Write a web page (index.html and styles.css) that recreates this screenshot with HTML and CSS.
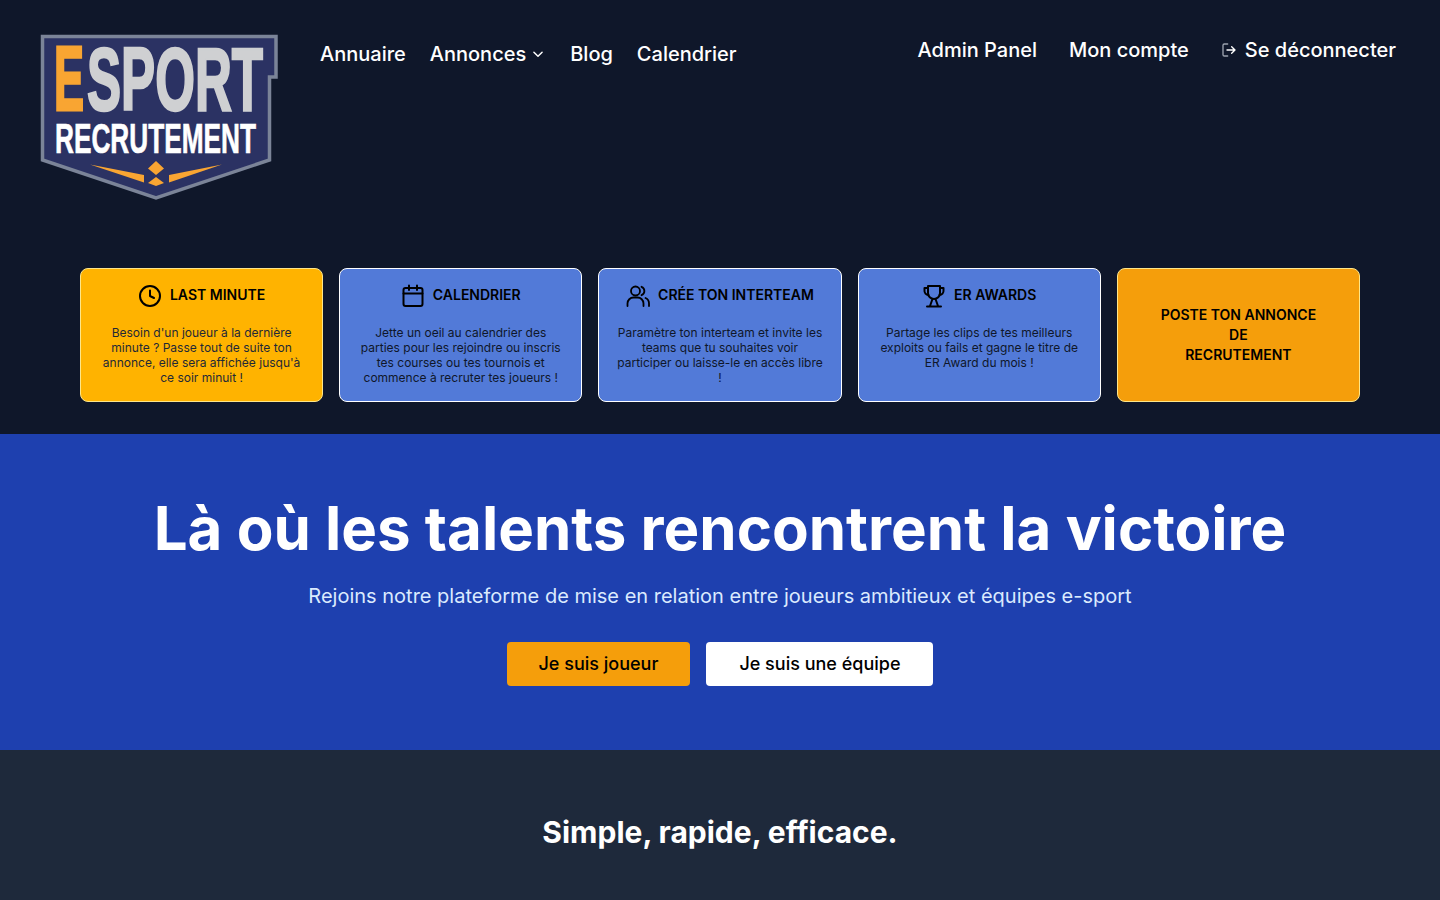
FILE: index.html
```html
<!DOCTYPE html>
<html lang="fr">
<head>
    <meta charset="UTF-8">
    <meta name="viewport" content="width=device-width, initial-scale=1.0">
    <title>Esport Recrutement</title>
    <link rel="stylesheet" href="styles.css">
</head>
<body>
    <header class="top">
        <a class="logo" href="#">
            <svg width="240" height="168" viewBox="40 33 240 168">
                <path d="M42.500 36.500H276V77H269.500V160L156 198L42.500 160Z" fill="#2b3263" stroke="#7b8498" stroke-width="3.500"/>
                <text class="logo-text logo-e" transform="translate(54 110) scale(1 1.700)" font-size="53" textLength="30" lengthAdjust="spacingAndGlyphs">E</text>
                <text class="logo-text logo-sport" transform="translate(87 110) scale(1 1.400)" font-size="63" textLength="176" lengthAdjust="spacingAndGlyphs">SPORT</text>
                <text class="logo-text logo-rec" transform="translate(55 153) scale(1 1.340)" font-size="32" textLength="201" lengthAdjust="spacingAndGlyphs">RECRUTEMENT</text>
                <path d="M90 164.500L144 175V182.500Z M222 164.500L169 175V182.500Z" fill="#f9a532"/>
                <path d="M156 161L164 168.500L156 175L148 168.500Z M156 177L164 183L156 186L148 183Z" fill="#f9a532"/>
            </svg>
        </a>
        <nav class="nav-main">
            <a href="#">Annuaire</a>
            <a href="#" class="has-caret">Annonces
                <svg width="14" height="14" viewBox="0 0 24 24" fill="none" stroke="currentColor" stroke-width="2.500" stroke-linecap="round" stroke-linejoin="round"><path d="M5 9l7 7 7-7"/></svg>
            </a>
            <a href="#">Blog</a>
            <a href="#">Calendrier</a>
        </nav>
        <nav class="nav-user">
            <a href="#">Admin Panel</a>
            <a href="#">Mon compte</a>
            <a href="#" class="logout">
                <svg width="16" height="16" viewBox="0 0 24 24" fill="none" stroke="currentColor" stroke-width="2" stroke-linecap="round" stroke-linejoin="round"><path d="M10 3H5a2 2 0 0 0-2 2v14a2 2 0 0 0 2 2h5" stroke="#9ca3af"/><path d="M9 12h12M16 7l5 5-5 5"/></svg>
                Se déconnecter
            </a>
        </nav>
    </header>

    <section class="cards">
        <a class="card card-amber" href="#">
            <h3><svg width="24" height="24" viewBox="0 0 24 24" fill="none" stroke="currentColor" stroke-width="2" stroke-linecap="round" stroke-linejoin="round"><circle cx="12" cy="12" r="10"/><path d="M12 6.500V12l4 2"/></svg><span>LAST MINUTE</span></h3>
            <p>Besoin d'un joueur à la dernière minute ? Passe tout de suite ton annonce, elle sera affichée jusqu'à ce soir minuit !</p>
        </a>
        <a class="card" href="#">
            <h3><svg width="24" height="24" viewBox="0 0 24 24" fill="none" stroke="currentColor" stroke-width="2" stroke-linecap="round" stroke-linejoin="round"><rect x="2.500" y="4" width="19" height="18" rx="2"/><path d="M8 1.500V6M16 1.500V6M2.500 9.500h19"/></svg><span>CALENDRIER</span></h3>
            <p>Jette un oeil au calendrier des parties pour les rejoindre ou inscris tes courses ou tes tournois et commence à recruter tes joueurs !</p>
        </a>
        <a class="card" href="#">
            <h3><svg width="24" height="24" viewBox="0 0 24 24" fill="none" stroke="currentColor" stroke-width="1.800" stroke-linecap="round" stroke-linejoin="round"><circle cx="9.500" cy="7" r="4.500"/><path d="M1.500 22v-2.500a6 6 0 0 1 6-6h4a6 6 0 0 1 6 6V22"/><path d="M15.500 2.800a4.500 4.500 0 0 1 0 8.400M19.500 14a6 6 0 0 1 3.500 5.500V22"/></svg><span>CRÉE TON INTERTEAM</span></h3>
            <p>Paramètre ton interteam et invite les teams que tu souhaites voir participer ou laisse-le en accès libre !</p>
        </a>
        <a class="card" href="#">
            <h3><svg width="24" height="24" viewBox="0 0 24 24" fill="none" stroke="currentColor" stroke-width="2" stroke-linecap="round" stroke-linejoin="round"><path d="M6 2h12v7a6 6 0 0 1-12 0Z"/><path d="M6 4H2.500v2.500A4 4 0 0 0 6.500 11M18 4h3.500v2.500a4 4 0 0 1-4 4.500"/><path d="M10.500 15L8 22M13.500 15L16 22M5 22.500h14"/></svg><span>ER AWARDS</span></h3>
            <p>Partage les clips de tes meilleurs exploits ou fails et gagne le titre de ER Award du mois !</p>
        </a>
        <a class="card card-cta" href="#">POSTE TON ANNONCE<br>DE<br>RECRUTEMENT</a>
    </section>

    <section class="hero">
        <h1>Là où les talents rencontrent la victoire</h1>
        <p>Rejoins notre plateforme de mise en relation entre joueurs ambitieux et équipes e-sport</p>
        <div class="hero-actions">
            <a class="btn btn-orange" href="#">Je suis joueur</a>
            <a class="btn btn-white" href="#">Je suis une équipe</a>
        </div>
    </section>

    <section class="simple">
        <h2>Simple, rapide, efficace.</h2>
    </section>
</body>
</html>
```

FILE: styles.css
```css
* {
    box-sizing: border-box;
}

html, body {
    height: 100%;
}

body {
    margin: 0;
    overflow: hidden;
    font-family: 'Inter', sans-serif;
    background: #0f172a;
    color: #fff;
}

a {
    color: inherit;
    text-decoration: none;
}

.top {
    display: flex;
    align-items: flex-start;
    height: 268px;
    padding: 33px 32px 0 40px;
    font-size: 20px;
    line-height: 28px;
    font-weight: 500;
}

.logo {
    display: block;
    width: 240px;
    height: 168px;
}

.logo svg {
    display: block;
}

.logo-text {
    font-family: 'Liberation Sans Narrow', 'Liberation Sans', sans-serif;
    font-weight: 700;
    stroke-width: 1.800;
}

.logo-e {
    fill: #f9a532;
    stroke: #f9a532;
}

.logo-sport {
    fill: #cfd0d2;
    stroke: #cfd0d2;
}

.logo-rec {
    fill: #fff;
    stroke: #fff;
    stroke-width: 0.500;
}

.nav-main {
    display: flex;
    gap: 24px;
    margin: 7px 0 0 40px;
}

.has-caret {
    display: flex;
    align-items: center;
    gap: 5px;
    padding-right: 1px;
}

.nav-user {
    display: flex;
    gap: 32px;
    margin: 3px 12px 0 auto;
}

.logout {
    display: flex;
    align-items: center;
    gap: 8px;
}

.cards {
    display: grid;
    grid-template-columns: repeat(5, 1fr);
    gap: 16px;
    padding: 0 80px 32px;
    height: 166px;
}

.card {
    display: block;
    padding: 15px 16px 0;
    border: 1px solid #fff;
    border-radius: 8px;
    background: #527ad8;
    color: #0f172a;
    text-align: center;
}

.card h3 {
    display: flex;
    align-items: center;
    justify-content: center;
    gap: 8px;
    height: 24px;
    margin: 0 0 17px;
    font-size: 14px;
    line-height: 20px;
    font-weight: 600;
    color: #000;
}

.card h3 span {
    margin-bottom: 2px;
}

.card p {
    margin: 0;
    font-size: 12px;
    line-height: 15px;
}

.card-amber {
    background: #ffb300;
    border-color: #fde68a;
    color: #1f2937;
}

.card-cta {
    display: flex;
    align-items: center;
    justify-content: center;
    padding: 0 16px;
    background: #f59e0b;
    border-color: #fde68a;
    color: #000;
    font-size: 14px;
    line-height: 20px;
    font-weight: 600;
}

.hero {
    height: 316px;
    padding-top: 58px;
    background: #1e40af;
    text-align: center;
}

.hero h1 {
    margin: 0;
    font-size: 60px;
    line-height: 72px;
    font-weight: 700;
}

.hero p {
    margin: 18px 0 0;
    font-size: 20px;
    line-height: 28px;
    color: #dbeafe;
}

.hero-actions {
    display: flex;
    justify-content: center;
    gap: 16px;
    margin-top: 32px;
}

.btn {
    display: block;
    height: 44px;
    padding: 0 32px;
    border-radius: 4px;
    font-size: 18px;
    line-height: 44px;
    font-weight: 500;
    color: #000;
}

.btn-orange {
    background: #f59e0b;
}

.btn-white {
    padding: 0 33px;
    background: #fff;
}

.simple {
    height: 150px;
    padding-top: 62px;
    background: #1e293b;
    text-align: center;
}

.simple h2 {
    margin: 0;
    font-size: 30px;
    line-height: 40px;
    font-weight: 700;
}
```
